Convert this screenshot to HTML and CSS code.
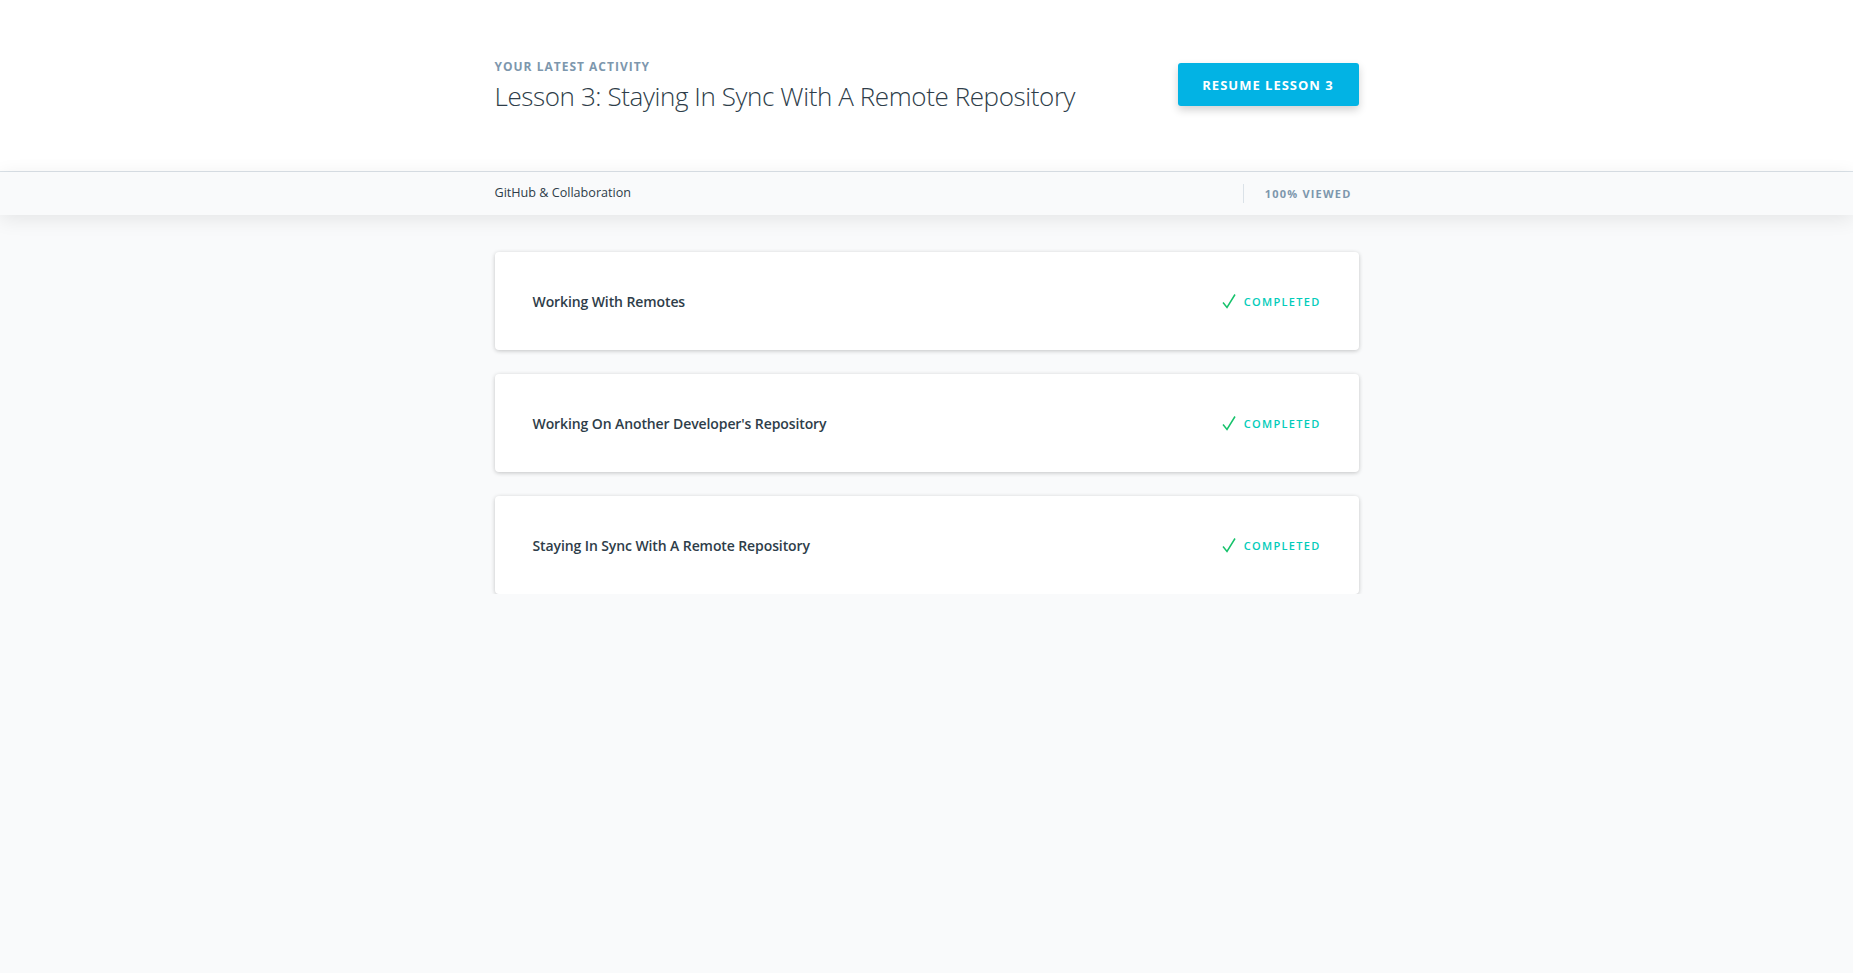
FILE: index.html
```html
<!DOCTYPE html>
<html lang="en">
<head>
<meta charset="utf-8">
<title>Lesson 3</title>
<link rel="stylesheet" href="styles.css">
</head>
<body>
<header class="hero">
  <div class="wrap hero-inner">
    <div class="hero-text">
      <div class="eyebrow">Your Latest Activity</div>
      <h1 class="title">Lesson 3: Staying In Sync With A Remote Repository</h1>
    </div>
    <button class="resume">Resume Lesson 3</button>
  </div>
</header>
<nav class="subbar">
  <div class="wrap subbar-inner">
    <div class="course">GitHub &amp; Collaboration</div>
    <div class="viewed">100% Viewed</div>
  </div>
</nav>
<main class="wrap list">
  <div class="card">
    <div class="card-title">Working With Remotes</div>
    <div class="status"><svg class="check" viewBox="0 0 14 16" width="14" height="16"><path d="M1 9.5 L5 14.5 L13 1.5" fill="none" stroke="#15c26b" stroke-width="1.5"/></svg><span>Completed</span></div>
  </div>
  <div class="card">
    <div class="card-title">Working On Another Developer's Repository</div>
    <div class="status"><svg class="check" viewBox="0 0 14 16" width="14" height="16"><path d="M1 9.5 L5 14.5 L13 1.5" fill="none" stroke="#15c26b" stroke-width="1.5"/></svg><span>Completed</span></div>
  </div>
  <div class="card">
    <div class="card-title">Staying In Sync With A Remote Repository</div>
    <div class="status"><svg class="check" viewBox="0 0 14 16" width="14" height="16"><path d="M1 9.5 L5 14.5 L13 1.5" fill="none" stroke="#15c26b" stroke-width="1.5"/></svg><span>Completed</span></div>
  </div>
</main>
</body>
</html>
```
FILE: styles.css
```css
html, body {
  margin: 0;
  padding: 0;
  background: #f9fafb;
  font-family: "Open Sans", "Liberation Sans", sans-serif;
  color: #2e3d49;
}
.wrap {
  width: 864px;
  margin: 0 auto;
}
.hero {
  background: #fff;
  height: 172px;
  border-bottom: 1px solid #dbe2e8;
  box-sizing: border-box;
}
.hero-inner {
  display: flex;
  justify-content: space-between;
  align-items: flex-start;
  padding-top: 59px;
}
.eyebrow {
  font-size: 12px;
  font-weight: 700;
  letter-spacing: 1px;
  text-transform: uppercase;
  color: #7d97ad;
  line-height: 16px;
}
.title {
  margin: 4px 0 0;
  font-size: 26px;
  font-weight: 300;
  letter-spacing: -0.4px;
  line-height: 34px;
  color: #2e3d49;
}
.resume {
  margin-top: 4px;
  width: 181px;
  height: 43px;
  border: 0;
  border-radius: 3px;
  background: #02b3e4;
  color: #fff;
  font-family: inherit;
  font-size: 13px;
  font-weight: 700;
  letter-spacing: 1px;
  text-transform: uppercase;
  box-shadow: 0 4px 8px rgba(0,0,0,0.18);
}
.subbar {
  background: #f9fafb;
  height: 43px;
  box-shadow: 0 4px 20px rgba(0,0,0,0.09);
  position: relative;
}
.subbar-inner {
  display: flex;
  justify-content: space-between;
  align-items: center;
  height: 43px;
}
.course {
  font-size: 12.6px;
  color: #2e3d49;
  margin-top: -2px;
}
.viewed {
  border-left: 1px solid #dbe2e8;
  height: 19px;
  line-height: 19px;
  padding-left: 21px;
  padding-right: 7px;
  font-size: 11px;
  font-weight: 700;
  letter-spacing: 1.2px;
  text-transform: uppercase;
  color: #7d97ad;
}
.list {
  padding-top: 37px;
  display: flex;
  flex-direction: column;
  gap: 24px;
}
.card {
  background: #fff;
  border-radius: 4px;
  height: 98px;
  box-sizing: border-box;
  padding: 0 38px;
  display: flex;
  align-items: center;
  justify-content: space-between;
  box-shadow: 0 1px 4px rgba(0,0,0,0.22);
}
.card-title {
  font-size: 14px;
  font-weight: 600;
  letter-spacing: -0.1px;
  color: #2e3d49;
}
.status {
  display: flex;
  align-items: center;
  gap: 8px;
  font-size: 11px;
  font-weight: 600;
  letter-spacing: 1.3px;
  text-transform: uppercase;
  color: #02ccba;
}
.check {
  display: block;
}
```
